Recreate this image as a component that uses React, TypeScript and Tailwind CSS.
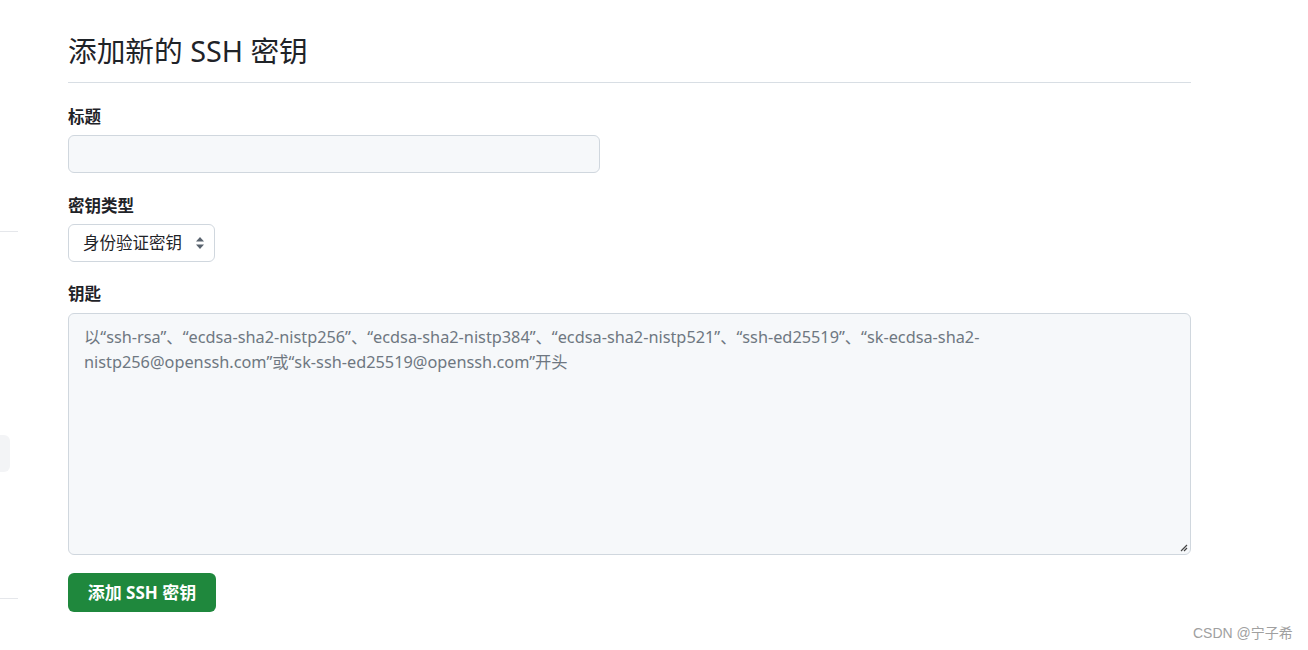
import React from "react";

const font = {
  fontFamily: '"Noto Sans", "Noto Sans CJK SC", sans-serif',
};

export default function App() {
  return (
    <div
      className="w-[1308px] h-[650px] bg-white text-[#1f2328] flex relative overflow-hidden"
      style={font}
    >
      <div className="w-[18px] flex flex-col">
        <div className="h-px bg-[#e5e7eb] mt-[231px]" />
        <div className="h-[37px] w-[10px] bg-[#f3f4f6] rounded-r-[6px] mt-[203px]" />
        <div className="h-px bg-[#e5e7eb] mt-[126px]" />
      </div>
      <div className="ml-[50px] w-[1123px] flex flex-col pt-[31px]">
        <div className="border-b border-[#d8dee4] pb-[11px]">
          <h2 className="text-[28.7px] leading-[40px] font-normal">添加新的 SSH 密钥</h2>
        </div>
        <label className="mt-[22px] text-[16.5px] leading-[24px] font-bold">标题</label>
        <div className="mt-[6px] w-[532px] h-[38px] rounded-[6px] border border-[#d0d7de] bg-[#f6f8fa]" />
        <label className="mt-[21px] text-[16.5px] leading-[24px] font-bold">密钥类型</label>
        <div className="mt-[6px] w-[147px] h-[38px] rounded-[6px] border border-[#d0d7de] bg-white flex items-center pl-[14px] pr-[8px] justify-between">
          <span className="text-[16.5px]">身份验证密钥</span>
          <svg width="10" height="14" viewBox="0 0 10 14" className="mr-[1px]">
            <path d="M5 1 L9 5.5 H1 Z" fill="#59636e" />
            <path d="M5 13 L9 8.5 H1 Z" fill="#59636e" />
          </svg>
        </div>
        <label className="mt-[20px] text-[16.5px] leading-[24px] font-bold">钥匙</label>
        <div className="mt-[7px] w-[1123px] h-[242px] rounded-[6px] border border-[#d0d7de] bg-[#f6f8fa] px-[15px] pt-[11px] relative">
          <p className="text-[16.3px] leading-[25px] text-[#6e7781]">
            以“ssh-rsa”、“ecdsa-sha2-nistp256”、“ecdsa-sha2-nistp384”、“ecdsa-sha2-nistp521”、“ssh-ed25519”、“sk-ecdsa-sha2-
            <br />
            nistp256@openssh.com”或“sk-ssh-ed25519@openssh.com”开头
          </p>
          <svg width="9" height="9" viewBox="0 0 9 9" className="absolute right-[2px] bottom-[2px]">
            <path d="M8 2 L2 8 M8 5 L5 8" stroke="#444" strokeWidth="1.2" />
          </svg>
        </div>
        <button className="mt-[18px] w-[148px] h-[39px] rounded-[6px] bg-[#1f883d] text-white text-[17px] font-bold flex items-center justify-center">
          添加 SSH 密钥
        </button>
      </div>
      <div className="absolute left-[1193px] top-[623px] text-[14px] text-[#a0a0a0]" style={{ fontFamily: '"Liberation Sans", "Noto Sans CJK SC", sans-serif' }}>
        CSDN @宁子希
      </div>
    </div>
  );
}
